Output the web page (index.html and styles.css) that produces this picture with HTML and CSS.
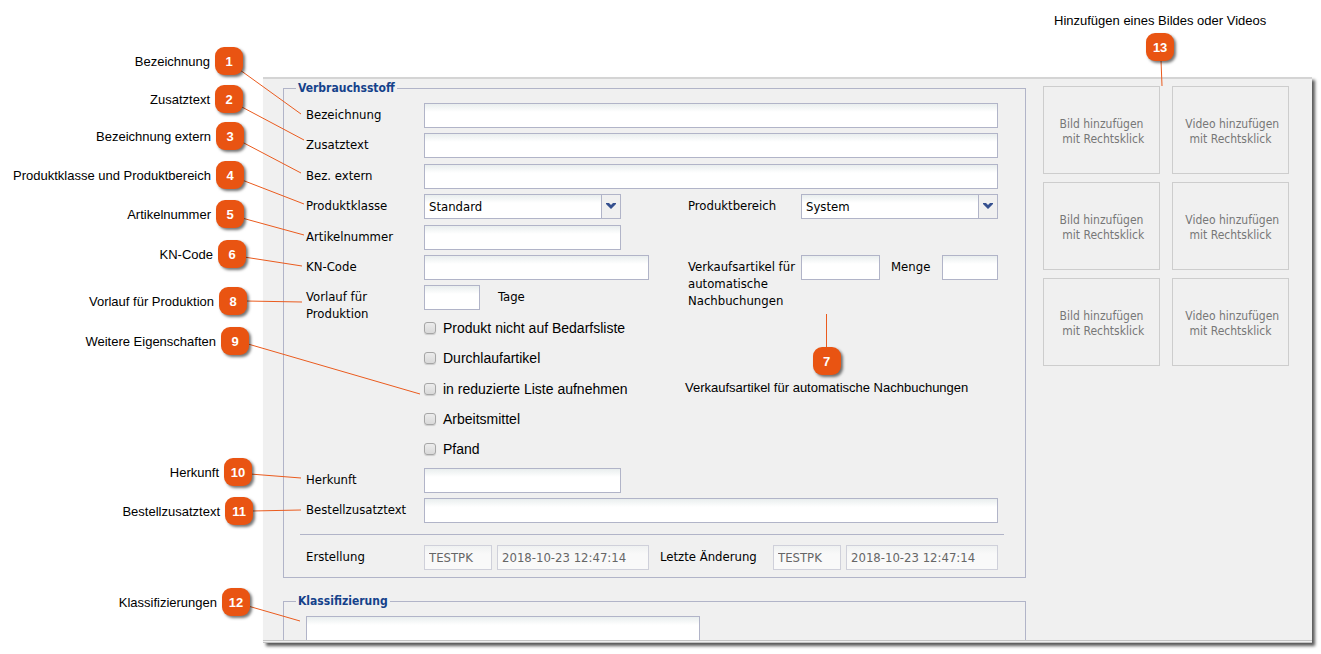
FILE: index.html
```html
<!DOCTYPE html>
<html lang="de">
<head>
<meta charset="utf-8">
<title>Verbrauchsstoff</title>
<link rel="stylesheet" href="styles.css">
</head>
<body>
<main class="stage">
  <div class="panel">
    <form class="form">
      <fieldset class="group">
        <legend>Verbrauchsstoff</legend>
        <div class="fields">
          <label class="lbl r1" for="bez">Bezeichnung</label>
          <input class="box r1 full" id="bez" type="text">
          <label class="lbl r2" for="zusatz">Zusatztext</label>
          <input class="box r2 full" id="zusatz" type="text">
          <label class="lbl r3" for="extern">Bez. extern</label>
          <input class="box r3 full" id="extern" type="text">

          <label class="lbl r4" for="klasse">Produktklasse</label>
          <div class="combo r4 left">
            <select class="box" id="klasse"><option>Standard</option></select>
            <span class="arrow"><svg width="10" height="7" viewBox="0 0 10 7"><path d="M0 0h3l2 2 2-2h3v1L5 6 0 1z"/></svg></span>
          </div>
          <label class="lbl r4 second" for="bereich">Produktbereich</label>
          <div class="combo r4 right">
            <select class="box" id="bereich"><option>System</option></select>
            <span class="arrow"><svg width="10" height="7" viewBox="0 0 10 7"><path d="M0 0h3l2 2 2-2h3v1L5 6 0 1z"/></svg></span>
          </div>

          <label class="lbl r5" for="artikel">Artikelnummer</label>
          <input class="box r5 left" id="artikel" type="text">

          <label class="lbl r6" for="kn">KN-Code</label>
          <input class="box r6 wide" id="kn" type="text">
          <label class="lbl r6 second tall" for="verkauf">Verkaufsartikel für automatische Nachbuchungen</label>
          <div class="pair r6 right">
            <input class="box grow" id="verkauf" type="text">
            <label class="lbl menge" for="menge">Menge</label>
            <input class="box short" id="menge" type="text">
          </div>

          <label class="lbl r7 tall" for="vorlauf">Vorlauf für Produktion</label>
          <div class="days r7 left">
            <input class="box short" id="vorlauf" type="text">
            <label class="lbl" for="vorlauf">Tage</label>
          </div>

          <label class="check r8"><input type="checkbox">Produkt nicht auf Bedarfsliste</label>
          <label class="check r9"><input type="checkbox">Durchlaufartikel</label>
          <label class="check r10"><input type="checkbox">in reduzierte Liste aufnehmen</label>
          <label class="check r11"><input type="checkbox">Arbeitsmittel</label>
          <label class="check r12"><input type="checkbox">Pfand</label>

          <label class="lbl r13" for="herkunft">Herkunft</label>
          <input class="box r13 left" id="herkunft" type="text">
          <label class="lbl r14" for="bestell">Bestellzusatztext</label>
          <input class="box r14 full" id="bestell" type="text">
        </div>
        <hr class="rule">
        <div class="audit">
          <label class="lbl created" for="cuser">Erstellung</label>
          <input class="box user" id="cuser" type="text" value="TESTPK" disabled>
          <input class="box grow" type="text" value="2018-10-23 12:47:14" aria-label="Erstellung Zeitpunkt" disabled>
          <label class="lbl changed" for="muser">Letzte Änderung</label>
          <input class="box user" id="muser" type="text" value="TESTPK" disabled>
          <input class="box grow" type="text" value="2018-10-23 12:47:14" aria-label="Letzte Änderung Zeitpunkt" disabled>
        </div>
      </fieldset>
      <fieldset class="group">
        <legend>Klassifizierung</legend>
        <textarea class="box classes" aria-label="Klassifizierung"></textarea>
      </fieldset>
    </form>
    <div class="media">
      <button type="button" class="slot">Bild hinzufügen<br>&nbsp;mit Rechtsklick</button>
      <button type="button" class="slot">&nbsp;Video hinzufügen<br>mit Rechtsklick</button>
      <button type="button" class="slot">Bild hinzufügen<br>&nbsp;mit Rechtsklick</button>
      <button type="button" class="slot">&nbsp;Video hinzufügen<br>mit Rechtsklick</button>
      <button type="button" class="slot">Bild hinzufügen<br>&nbsp;mit Rechtsklick</button>
      <button type="button" class="slot">&nbsp;Video hinzufügen<br>mit Rechtsklick</button>
    </div>
  </div>

  <svg class="leaders" aria-hidden="true">
    <path d="M240 70L301 114M240 106L304 140M242 142L301 173M242 180L304 204M242 218L304 235M244 257L302 266M246 301L302 302M248 344L420 394M250 474L301 478M252 511L301 510M248 606L300 621M1161 60L1162 86M826.500 314V350"/>
  </svg>
  <div class="callout c1">Bezeichnung<span class="badge">1</span></div>
  <div class="callout c2">Zusatztext<span class="badge">2</span></div>
  <div class="callout c3">Bezeichnung extern<span class="badge">3</span></div>
  <div class="callout c4">Produktklasse und Produktbereich<span class="badge">4</span></div>
  <div class="callout c5">Artikelnummer<span class="badge">5</span></div>
  <div class="callout c6">KN-Code<span class="badge">6</span></div>
  <div class="callout c8">Vorlauf für Produktion<span class="badge">8</span></div>
  <div class="callout c9">Weitere Eigenschaften<span class="badge">9</span></div>
  <div class="callout c10">Herkunft<span class="badge">10</span></div>
  <div class="callout c11">Bestellzusatztext<span class="badge">11</span></div>
  <div class="callout c12">Klassifizierungen<span class="badge">12</span></div>
  <div class="callout stacked c13">Hinzufügen eines Bildes oder Videos<span class="badge">13</span></div>
  <div class="callout stacked c7"><span class="badge">7</span>Verkaufsartikel für automatische Nachbuchungen</div>
</main>
</body>
</html>
```
FILE: styles.css
```css
* { box-sizing: border-box; }

body {
  margin: 0;
  background: #fff;
  color: #000;
  font-family: "Liberation Sans", Arial, sans-serif;
  font-size: 13px;
}

.stage {
  position: relative;
  display: flex;
  flex-direction: column;
  height: 100vh;
  padding: 77px 9px 11px 263px;
  overflow: hidden;
}

/* Form panel */
.panel {
  flex: 1;
  min-height: 0;
  display: flex;
  align-items: flex-start;
  gap: 17px;
  padding: 0 23px 0 20px;
  overflow: hidden;
  background: #f0f0f0;
  border-top: 2px solid #d4d4d4;
  border-bottom: 3px double #c4c4c4;
  box-shadow: 3px 3px 3px rgba(0, 0, 0, 0.65);
}

.form {
  flex: 1;
  min-width: 0;
  display: flex;
  flex-direction: column;
  gap: 14px;
}

.group {
  min-width: 0;
  margin: 0;
  padding: 6px 27px 7px 22px;
  border: 1px solid #b1b4c8;
}

.group legend {
  margin-left: -10px;
  padding: 0 2px;
  color: #15428b;
  font: bold 12px/18px "DejaVu Sans Condensed", "DejaVu Sans", sans-serif;
}

.fields {
  display: grid;
  grid-template-columns: 118px 1fr 28px 39px 113px 1fr;
  grid-template-rows: repeat(2, 30px 31px 30px 31px 30px) 30px 31px 30px 25px;
  align-items: start;
}

.r1 { grid-row: 1; }
.r2 { grid-row: 2; }
.r3 { grid-row: 3; }
.r4 { grid-row: 4; }
.r5 { grid-row: 5; }
.r6 { grid-row: 6; }
.r7 { grid-row: 7; }
.r8 { grid-row: 8; }
.r9 { grid-row: 9; }
.r10 { grid-row: 10; }
.r11 { grid-row: 11; }
.r12 { grid-row: 12; }
.r13 { grid-row: 13; }
.r14 { grid-row: 14; }
.tall { grid-row-end: span 2; }

.full { grid-column: 2 / 7; }
.left { grid-column: 2; }
.wide { grid-column: 2 / 4; }
.right { grid-column: 6; }

.lbl {
  grid-column: 1;
  padding-top: 3px;
  font: 13px/17px "DejaVu Sans Condensed", "DejaVu Sans", sans-serif;
}

.lbl.second { grid-column: 5; }

.box {
  width: 100%;
  min-width: 0;
  height: 25px;
  margin: 0;
  padding: 0 4px;
  border: 1px solid #b1b4c8;
  border-radius: 0;
  background: linear-gradient(#e9eeee, #fff 8px);
  color: #000;
  font: 13px/23px "DejaVu Sans Condensed", "DejaVu Sans", sans-serif;
}

.box:disabled {
  border-color: #cfd0da;
  background: linear-gradient(#eff1f1, #f9f9f9 8px);
  color: #666;
}

.combo { position: relative; }

.combo select {
  display: block;
  appearance: none;
  padding-right: 24px;
}

.arrow {
  position: absolute;
  top: 1px;
  right: 1px;
  bottom: 1px;
  width: 19px;
  display: flex;
  align-items: center;
  justify-content: center;
  border-left: 1px solid #b1b4c8;
  background: #f0f0f0;
  pointer-events: none;
}

.arrow svg { fill: #35508f; }

.pair,
.days,
.audit { display: flex; }

.days { gap: 18px; }
.box.grow { flex: 1; }
.box.short { flex: none; width: 56px; }
.menge { flex: none; width: 62px; padding-left: 11px; }

.check {
  grid-column: 2 / 5;
  display: flex;
  align-items: center;
  gap: 7px;
  height: 23px;
  font-size: 14px;
}

.check input {
  appearance: none;
  width: 12px;
  height: 12px;
  margin: 0;
  border: 1px solid #a6a6a6;
  border-radius: 3px;
  background: linear-gradient(#ececec, #d9d9d9);
  box-shadow: 0 1px 1px rgba(0, 0, 0, 0.15);
}

.rule {
  height: 1px;
  margin: 11px -6px 10px;
  border: 0;
  background: #b1b4c8;
}

.audit .user { flex: none; width: 68px; margin-right: 5px; }
.created { flex: none; width: 118px; }
.changed { flex: none; width: 124px; padding-left: 11px; }

.classes {
  display: block;
  width: 394px;
  height: 80px;
  resize: none;
}

/* Picture and video slots */
.media {
  display: grid;
  grid-template-columns: 117px 117px;
  gap: 8px 12px;
  padding-top: 7px;
}

.slot {
  height: 88px;
  padding: 4px 0 0;
  border: 1px solid #cdcdcd;
  background: transparent;
  color: #777;
  font: 12px/15px "DejaVu Sans Condensed", "DejaVu Sans", sans-serif;
}

/* Numbered callouts */
.leaders {
  position: absolute;
  inset: 0;
  width: 100%;
  height: 100%;
  fill: none;
  stroke: #ea5b1e;
  pointer-events: none;
}

.callout {
  position: absolute;
  left: 0;
  display: flex;
  align-items: center;
  justify-content: flex-end;
  gap: 5px;
  white-space: nowrap;
}

.badge {
  width: 28px;
  height: 28px;
  border-radius: 9px;
  background: #e95412;
  box-shadow: 2px 2px 3px rgba(0, 0, 0, 0.55);
  color: #fff;
  font-size: 13px;
  font-weight: bold;
  line-height: 29px;
  text-align: center;
}

.stacked { flex-direction: column; justify-content: flex-start; }

.c1 { top: 47px; width: 243px; }
.c2 { top: 85px; width: 243px; }
.c3 { top: 122px; width: 244px; }
.c4 { top: 161px; width: 244px; }
.c5 { top: 200px; width: 244px; }
.c6 { top: 240px; width: 246px; }
.c8 { top: 287px; width: 247px; }
.c9 { top: 327px; width: 249px; }
.c10 { top: 458px; width: 252px; }
.c11 { top: 497px; width: 253px; }
.c12 { top: 588px; width: 250px; }
.c13 { top: 13px; left: 1054px; }
.c7 { top: 347px; left: 685px; }
```
